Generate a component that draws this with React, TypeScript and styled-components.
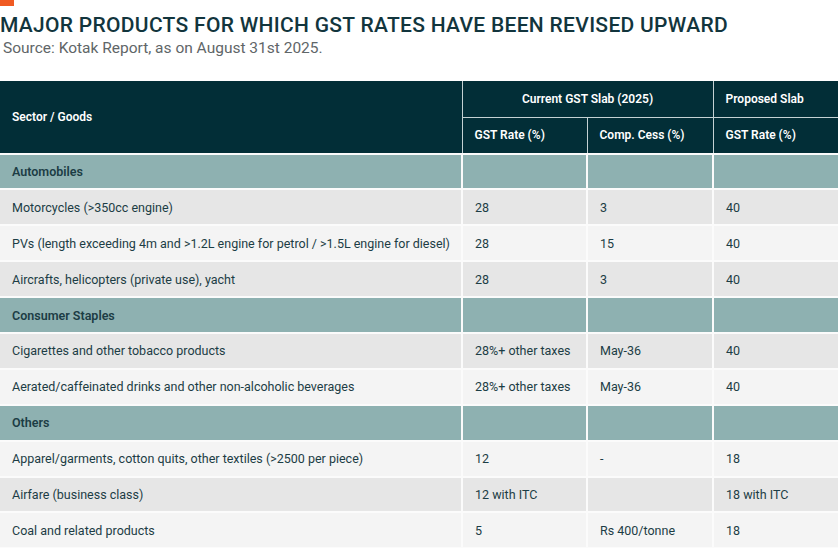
import React from "react";
import styled, { createGlobalStyle } from "styled-components";

const GlobalStyle = createGlobalStyle`
  html, body {
    margin: 0;
    padding: 0;
    background: #ffffff;
  }
  body {
    font-family: Roboto, "Liberation Sans", sans-serif;
    color: #1c3d45;
  }
`;

const Page = styled.div`
  width: 838px;
  height: 548px;
  overflow: hidden;
  background: #fff;
`;

const Accent = styled.div`
  width: 14px;
  height: 6px;
  background: #f05a22;
`;

const Title = styled.h1`
  margin: 6px 0 0 0;
  font-size: 21px;
  line-height: 26px;
  font-weight: 500;
  letter-spacing: 0.3px;
  color: #12353d;
  white-space: nowrap;
`;

const Source = styled.p`
  margin: 0 0 0 3px;
  font-size: 15.5px;
  line-height: 20px;
  color: #5f6668;
`;

const Table = styled.table`
  margin-top: 23px;
  width: 838px;
  border-collapse: collapse;
  table-layout: fixed;
  font-size: 12.5px;
`;

const Head = styled.th<{ $center?: boolean; $h: number }>`
  height: ${(p) => p.$h}px;
  padding: 0 12px;
  background: #022e37;
  color: #ffffff;
  font-size: 12px;
  font-weight: 600;
  text-align: ${(p) => (p.$center ? "center" : "left")};
  border: 1px solid #c4d1d3;
  border-top: none;
  &:first-child {
    border-left: none;
  }
  &:last-child {
    border-right: none;
  }
`;

const Row = styled.tr<{ $tone: "section" | "odd" | "even" }>`
  height: 35.9px;
  background: ${(p) =>
    p.$tone === "section" ? "#8eb1b1" : p.$tone === "odd" ? "#e6e6e6" : "#f4f4f4"};
  font-weight: ${(p) => (p.$tone === "section" ? 600 : 400)};
`;

const Cell = styled.td`
  padding: 0 12px;
  border: 2px solid #fbfbfb;
  color: #1c3d45;
  white-space: nowrap;
  &:first-child {
    border-left: none;
  }
  &:last-child {
    border-right: none;
  }
`;

type Line = { tone: "section" | "odd" | "even"; cells: string[] };

const rows: Line[] = [
  { tone: "section", cells: ["Automobiles", "", "", ""] },
  { tone: "odd", cells: ["Motorcycles (>350cc engine)", "28", "3", "40"] },
  {
    tone: "even",
    cells: [
      "PVs (length exceeding 4m and >1.2L engine for petrol / >1.5L engine for diesel)",
      "28",
      "15",
      "40",
    ],
  },
  { tone: "odd", cells: ["Aircrafts, helicopters (private use), yacht", "28", "3", "40"] },
  { tone: "section", cells: ["Consumer Staples", "", "", ""] },
  { tone: "odd", cells: ["Cigarettes and other tobacco products", "28%+ other taxes", "May-36", "40"] },
  {
    tone: "even",
    cells: ["Aerated/caffeinated drinks and other non-alcoholic beverages", "28%+ other taxes", "May-36", "40"],
  },
  { tone: "section", cells: ["Others", "", "", ""] },
  {
    tone: "even",
    cells: ["Apparel/garments, cotton quits, other textiles (>2500 per piece)", "12", "-", "18"],
  },
  { tone: "odd", cells: ["Airfare (business class)", "12 with ITC", "", "18 with ITC"] },
  { tone: "even", cells: ["Coal and related products", "5", "Rs 400/tonne", "18"] },
];

export default function App() {
  return (
    <Page>
      <GlobalStyle />
      <Accent />
      <Title>MAJOR PRODUCTS FOR WHICH GST RATES HAVE BEEN REVISED UPWARD</Title>
      <Source>Source: Kotak Report, as on August 31st 2025.</Source>
      <Table>
        <colgroup>
          <col style={{ width: 462 }} />
          <col style={{ width: 125 }} />
          <col style={{ width: 126 }} />
          <col style={{ width: 125 }} />
        </colgroup>
        <thead>
          <tr>
            <Head rowSpan={2} $h={35.5}>
              Sector / Goods
            </Head>
            <Head colSpan={2} $center $h={35.5}>
              Current GST Slab (2025)
            </Head>
            <Head $h={35.5}>Proposed Slab</Head>
          </tr>
          <tr>
            <Head $h={35}>GST Rate (%)</Head>
            <Head $h={35}>Comp. Cess (%)</Head>
            <Head $h={35}>GST Rate (%)</Head>
          </tr>
        </thead>
        <tbody>
          {rows.map((r, i) => (
            <Row key={i} $tone={r.tone}>
              {r.cells.map((c, j) => (
                <Cell key={j}>{c}</Cell>
              ))}
            </Row>
          ))}
        </tbody>
      </Table>
    </Page>
  );
}
